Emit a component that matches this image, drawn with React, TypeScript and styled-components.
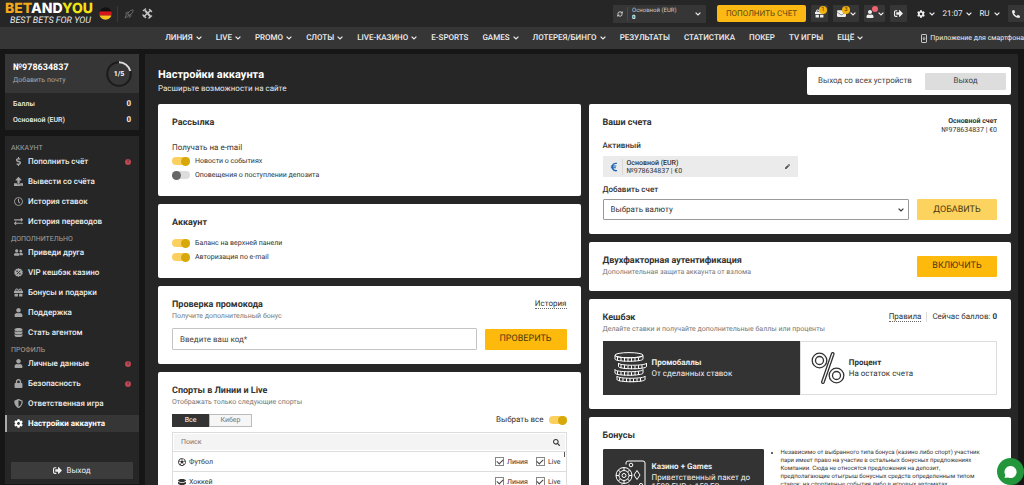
import React from "react";
import styled, { createGlobalStyle, css } from "styled-components";
import {
  FaDollarSign, FaUpload, FaRegClock, FaExchangeAlt, FaUserFriends, FaGift, FaUser, FaDatabase,
  FaLock, FaShieldAlt, FaCog, FaSignOutAlt, FaEnvelope, FaPhoneAlt, FaSearch, FaPen,
  FaRegFutbol, FaHockeyPuck, FaEuroSign,
} from "react-icons/fa";
import { Rocket, RefreshCw } from "lucide-react";

const GlobalStyle = createGlobalStyle`
  * { box-sizing: border-box; }
  html, body, #root { height: 100%; }
  body { margin: 0; background: #161616; color: #333; font: 400 8px/12px Roboto, "Liberation Sans", sans-serif; text-rendering: geometricPrecision; overflow: hidden; }
  button, input, select { font: inherit; color: inherit; margin: 0; text-rendering: inherit; }
  button { cursor: pointer; border: 0; padding: 0; }
  a { color: inherit; text-decoration: none; }
  h1, h2, h3, p, ul { margin: 0; padding: 0; }
  svg { flex: none; display: block; }
`;

const Shell = styled.div`
  height: 100vh;
  display: flex;
  flex-direction: column;
  overflow: hidden;
`;

/* ---------- top bar ---------- */
const TopBar = styled.header`
  flex: none;
  height: 27px;
  display: flex;
  align-items: center;
  background: #262626;
  color: #eee;
  padding-left: 5px;
  overflow: hidden;
`;
const Logo = styled.a`
  display: flex;
  flex-direction: column;
  font: 800 14px/15px Inter, sans-serif;
  color: #fff;
  width: 86px;
  white-space: nowrap;
`;
const Gold = styled.span`color: #f0a81c;`;
const Lemon = styled.span`color: #f2e311;`;
const Slogan = styled.span`
  font: italic 400 9px/10px Roboto, sans-serif;
  text-align: right;
  color: #e8e8e8;
`;
const FlagButton = styled.button`
  background: none;
  margin-left: 8px;
`;
const Divider = styled.span`
  width: 1px;
  height: 16px;
  background: #3a3a3a;
  margin: 0 6px 0 5px;
`;
const IconLink = styled.a`
  display: flex;
  margin-right: 8px;
  color: #c4c4c4;
`;
const TopTools = styled.div`
  margin-left: auto;
  flex: none;
  display: flex;
  align-items: center;
  gap: 5px;
`;
const Balance = styled.button`
  width: 93px;
  height: 18px;
  display: flex;
  align-items: center;
  gap: 4px;
  padding: 0 5px 0 4px;
  background: #363636;
  color: #eee;
  border-radius: 1px;
  text-align: left;
`;
const BalanceText = styled.span`
  flex: 1;
  border-left: 1px solid #4a4a4a;
  padding-left: 4px;
  font-size: 6px;
  line-height: 7px;
  color: #ccc;
  b { display: block; color: #fff; }
`;
const TopDeposit = styled.button`
  width: 89px;
  height: 17px;
  margin: 0 0 0 6px;
  background: #fdb913;
  color: #5a4a10;
  border-radius: 2px;
  font-size: 8px;
`;
const TopButton = styled.button<{ $w: number; $plain?: boolean }>`
  position: relative;
  width: ${(p) => p.$w}px;
  height: 17px;
  display: flex;
  align-items: center;
  justify-content: center;
  gap: 4px;
  background: ${(p) => (p.$plain ? "transparent" : "#363636")};
  color: #eee;
  border-radius: 1px;
`;
const Bubble = styled.span<{ $red?: boolean }>`
  position: absolute;
  top: 1px;
  right: ${(p) => (p.$red ? 7 : 1)}px;
  width: ${(p) => (p.$red ? 6 : 8)}px;
  height: ${(p) => (p.$red ? 6 : 8)}px;
  border-radius: 50%;
  background: ${(p) => (p.$red ? "#ef6370" : "#f0b310")};
  color: #4a3a08;
  font-size: 6px;
  line-height: 8px;
  text-align: center;
`;
const MailBubble = styled(Bubble)`right: 9px;`;

/* ---------- navigation ---------- */
const NavBar = styled.nav`
  flex: none;
  height: 22px;
  display: flex;
  align-items: center;
  background: #363636;
  color: #eee;
  overflow: hidden;
  white-space: nowrap;
`;
const NavLinks = styled.div`
  flex: 1;
  display: flex;
  justify-content: center;
  gap: 14px;
  padding-left: 107px;
`;
const NavLink = styled.a`
  display: flex;
  align-items: center;
  gap: 3px;
  font-weight: 500;
`;
const AppLink = styled.a`
  display: flex;
  align-items: center;
  gap: 3px;
  font-size: 7px;
`;

/* ---------- columns ---------- */
const Body = styled.div`
  flex: 1;
  min-height: 0;
  display: grid;
  grid-template-columns: 134px minmax(0, 1fr);
  gap: 6px;
  padding: 5px 6px 0 5px;
`;
const Sidebar = styled.aside`
  display: flex;
  flex-direction: column;
  gap: 6px;
  min-height: 0;
  color: #eee;
  padding-bottom: 1px;
`;
const Profile = styled.section`
  background: #262626;
  padding-bottom: 2px;
`;
const ProfileHead = styled.div`
  display: flex;
  align-items: center;
  justify-content: space-between;
  background: #363636;
  height: 39px;
  padding: 0 6px 0 8px;
  margin-bottom: 3px;
`;
const AccountNo = styled.strong`
  display: block;
  font-size: 9px;
  font-weight: 700;
  color: #fff;
`;
const MailLink = styled.a`
  font-size: 7px;
  line-height: 11px;
  color: #a8a8a8;
`;
const BalanceLine = styled.div`
  display: flex;
  justify-content: space-between;
  padding: 0 8px;
  line-height: 16px;
  font-weight: 500;
  font-size: 7px;
  b { font-size: 8px; }
`;
const Menu = styled.nav`
  flex: 1;
  display: flex;
  flex-direction: column;
  background: #262626;
  padding: 5px 0;
`;
const MenuTitle = styled.h3`
  font-size: 7px;
  line-height: 8px;
  font-weight: 400;
  color: #a0a0a0;
  padding: 3px 6px 0;
`;
const MenuList = styled.ul`
  list-style: none;
  display: flex;
  flex-direction: column;
  gap: 3px;
  padding: 1px 0 2px;
`;
const MenuLink = styled.a<{ $active?: boolean }>`
  display: flex;
  align-items: center;
  gap: 5px;
  height: 17px;
  padding: 0 8px 0 7px;
  border-left: 2px solid transparent;
  font-weight: 500;
  svg { color: #a6a6a6; }
  ${(p) => p.$active && css`
    background: #363636;
    border-color: #aaa;
    color: #fff;
    font-weight: 700;
    svg { color: #fff; }
  `}
`;
const Alert = styled.span`
  margin-left: auto;
  width: 6px;
  height: 6px;
  border-radius: 50%;
  background: #c2454f;
  color: #262626;
  font-size: 5px;
  line-height: 6px;
  text-align: center;
`;
const LogoutButton = styled.button`
  margin: auto 6px 0;
  height: 17px;
  display: flex;
  align-items: center;
  justify-content: center;
  gap: 4px;
  background: #3c3c3c;
  color: #eee;
`;

const Main = styled.main`
  background: #262626;
  padding: 13px 7px 0 13px;
  overflow: hidden;
`;
const PageHead = styled.div`
  display: flex;
  justify-content: space-between;
  align-items: flex-end;
  margin-bottom: 8px;
  color: #fff;
`;
const PageTitle = styled.h1`
  font-size: 11px;
  line-height: 14px;
  font-weight: 700;
`;
const PageSub = styled.p`
  line-height: 14px;
  color: #e6e6e6;
`;
const LogoutAll = styled.div`
  display: flex;
  align-items: center;
  justify-content: space-between;
  width: 204px;
  height: 28px;
  padding: 0 5px 0 11px;
  margin-bottom: 1px;
  border-radius: 2px;
  background: #fff;
  color: #444;
`;
const GreyButton = styled.button`
  width: 81px;
  height: 17px;
  background: #ddd;
  color: #444;
  border-radius: 1px;
`;
const Columns = styled.div`
  display: grid;
  grid-template-columns: minmax(0, 1fr) minmax(0, 1fr);
  gap: 8px;
`;
const Column = styled.div`
  display: flex;
  flex-direction: column;
  gap: 8px;
`;

/* ---------- cards ---------- */
const Card = styled.section`
  background: #fff;
  border-radius: 2px;
  padding: 13px 14px 14px;
`;
const Row = styled.div<{ $top?: number; $gap?: number; $start?: boolean }>`
  display: flex;
  align-items: ${(p) => (p.$start ? "flex-start" : "center")};
  justify-content: space-between;
  gap: ${(p) => p.$gap ?? 0}px;
  margin-top: ${(p) => p.$top ?? 0}px;
`;
const CardTitle = styled.h2`
  font-size: 9px;
  line-height: 12px;
  font-weight: 700;
  color: #333;
`;
const Hint = styled.p`
  font-size: 7px;
  line-height: 10px;
  color: #777;
`;
const Lead = styled.p`margin-top: 13px;`;
const Toggles = styled.div<{ $top?: number }>`margin-top: ${(p) => p.$top ?? 0}px;`;
const ToggleLabel = styled.label<{ $big?: boolean }>`
  display: flex;
  align-items: center;
  flex-direction: ${(p) => (p.$big ? "row-reverse" : "row")};
  gap: 5px;
  height: 14px;
  font-size: ${(p) => (p.$big ? 8 : 7)}px;
`;
const Switch = styled.input`
  appearance: none;
  width: 18px;
  height: 8px;
  border-radius: 4px;
  background: #ddd;
  display: flex;
  align-items: center;
  &::before {
    content: "";
    width: 9px;
    height: 9px;
    flex: none;
    border-radius: 50%;
    background: #666;
  }
  &:checked { background: #fcd05e; justify-content: flex-end; }
  &:checked::before { background: #d6a80a; }
`;
const DottedLink = styled.a`
  border-bottom: 1px dotted #666;
  line-height: 9px;
`;
const YellowButton = styled.button<{ $w: number; $soft?: boolean }>`
  flex: none;
  width: ${(p) => p.$w}px;
  height: 21px;
  border-radius: 1px;
  background: ${(p) => (p.$soft ? "#fdd35f" : "#fdb90c")};
  color: #4a3b10;
  font-size: 9px;
`;
const CodeInput = styled.input`
  flex: 1;
  min-width: 0;
  height: 22px;
  border: 1px solid #c4c4c4;
  border-radius: 1px;
  padding: 0 7px;
  background: #fff;
  outline: 0;
  &::placeholder { color: #444; opacity: 1; }
`;
const Summary = styled.div`
  font-size: 7px;
  line-height: 9px;
  text-align: right;
  b { display: block; font-weight: 700; }
`;
const Label = styled.label<{ $top: number; $bottom: number }>`
  display: block;
  font-size: 8px;
  font-weight: 500;
  margin: ${(p) => p.$top}px 0 ${(p) => p.$bottom}px;
`;
const Wallet = styled.div`
  display: flex;
  align-items: center;
  width: 195px;
  height: 21px;
  padding: 0 8px 0 6px;
  background: #ebebeb;
  color: #1f64b4;
`;
const WalletText = styled.div`
  flex: 1;
  margin-left: 3px;
  padding-left: 4px;
  border-left: 1px solid #d8d8d8;
  font-size: 7px;
  line-height: 8px;
  color: #333;
  b { display: block; font-weight: 500; }
`;
const EditButton = styled.button`
  background: none;
  color: #555;
`;
const SelectBox = styled.div`
  flex: 1;
  display: grid;
  align-items: center;
  > * { grid-area: 1 / 1; }
  > svg { justify-self: end; margin-right: 5px; pointer-events: none; }
`;
const Select = styled.select`
  appearance: none;
  width: 100%;
  height: 21px;
  padding: 0 7px;
  border: 1px solid #999;
  border-radius: 1px;
  background: #fff;
  outline: 0;
`;
const Points = styled.div`
  display: flex;
  line-height: 9px;
  gap: 5px;
  span { border-left: 1px solid #ddd; padding-left: 5px; }
`;
const Tiles = styled.div`
  display: grid;
  grid-template-columns: 1fr 1fr;
  margin-top: 7px;
`;
const Tile = styled.button<{ $dark?: boolean }>`
  display: flex;
  align-items: center;
  gap: 4px;
  height: 54px;
  padding: 0 10px;
  text-align: left;
  background: ${(p) => (p.$dark ? "#333" : "#fff")};
  color: ${(p) => (p.$dark ? "#eee" : "#333")};
  border: 1px solid ${(p) => (p.$dark ? "#333" : "#ddd")};
  b { display: block; font-weight: 700; }
  line-height: 11px;
`;
const BonusGrid = styled.div`
  display: grid;
  grid-template-columns: 161px 1fr;
  align-items: start;
  gap: 11px;
  margin-top: 7px;
`;
const BonusTile = styled(Tile)`
  border-radius: 1px;
  line-height: 9px;
  b { margin-bottom: 2px; }
`;
const Notes = styled.ul`
  padding-left: 6px;
  font-size: 6px;
  line-height: 8px;
  list-style: disc;
  white-space: nowrap;
`;

const Tabs = styled.div`
  display: flex;
`;
const Tab = styled.button<{ $active?: boolean; $w: number }>`
  width: ${(p) => p.$w}px;
  height: 13px;
  font-size: 7px;
  line-height: 11px;
  border: 1px solid ${(p) => (p.$active ? "#333" : "#bbb")};
  background: ${(p) => (p.$active ? "#333" : "#f6f6f6")};
  color: ${(p) => (p.$active ? "#fff" : "#777")};
`;
const SportsBox = styled.div`
  margin-top: 5px;
  border: 1px solid #ddd;
`;
const SearchLine = styled.label`
  display: flex;
  align-items: center;
  margin: 1px;
  padding: 0 5px;
  height: 16px;
  background: #f4f4f4;
`;
const SearchInput = styled.input`
  flex: 1;
  border: 0;
  background: none;
  outline: 0;
  padding: 0 2px;
  font-size: 7px;
  &::placeholder { color: #777; opacity: 1; }
`;
const SportList = styled.div`
  position: relative;
  height: 60px;
`;
const ScrollThumb = styled.span`
  position: absolute;
  top: 1px;
  right: 1px;
  width: 1px;
  height: 5px;
  background: #555;
`;
const SportRow = styled.div`
  display: flex;
  align-items: center;
  gap: 8px;
  height: 20px;
  padding: 0 5px;
  border-top: 1px solid #ddd;
  font-size: 7px;
`;
const SportName = styled.span`
  flex: 1;
  display: flex;
  align-items: center;
  gap: 3px;
`;
const CheckLabel = styled.label`
  display: flex;
  align-items: center;
  gap: 3px;
`;
const Check = styled.input`
  appearance: none;
  width: 9px;
  height: 9px;
  border: 1px solid #888;
  display: grid;
  place-items: center;
  &:checked::before {
    content: "";
    width: 5px;
    height: 3px;
    border: solid #444;
    border-width: 0 0 1px 1px;
    transform: rotate(-45deg);
    margin-bottom: 2px;
  }
`;
const ChatButton = styled.button`
  position: fixed;
  right: 0;
  bottom: 0;
  width: 27px;
  height: 27px;
  border-radius: 50%;
  background: #23953a;
  display: grid;
  place-items: center;
`;

/* ---------- drawings ---------- */
const Chevron = () => (
  <svg width="6" height="4" viewBox="0 0 6 4" fill="none" stroke="currentColor" strokeWidth="1.2"><path d="M.6.6 3 3 5.4.6" /></svg>
);
const Flag = () => (
  <svg width="13" height="13" viewBox="0 0 13 13">
    <clipPath id="flag"><circle cx="6.5" cy="6.5" r="6.2" /></clipPath>
    <g clipPath="url(#flag)">
      <rect width="13" height="4.5" fill="#111" /><rect y="4.5" width="13" height="4" fill="#d8141c" /><rect y="8.5" width="13" height="5" fill="#f7c51e" />
    </g>
  </svg>
);
const Plane = () => (
  <svg width="11" height="11" viewBox="0 0 22 22" fill="none" stroke="currentColor" strokeLinecap="round">
    <path strokeWidth="4" d="m7 6 9 10" /><path strokeWidth="3" d="M4 17 17 5" /><path strokeWidth="3" d="M3 5 7 2M14 20l5-4M15 3l4 4M2 14l5 5" />
  </svg>
);
const Ring = () => (
  <svg width="28" height="28" viewBox="0 0 28 28" fill="none">
    <circle cx="14" cy="14" r="11.8" stroke="#1b1b1b" strokeWidth="2" />
    <path d="M14 2.2A11.8 11.8 0 0 1 25.3 11" stroke="#ddd" strokeWidth="2" />
    <text x="14" y="16" textAnchor="middle" fill="#fff" fontSize="7" fontWeight="700">1/5</text>
  </svg>
);
const PercentBadge = () => (
  <svg width="9" height="9" viewBox="0 0 16 16">
    <path fill="currentColor" d="m8 0 2 1.6 2.6-.2.8 2.5L15.600 5.500 15 8l.6 2.500-2.200 1.600-.8 2.500-2.600-.2L8 16l-2-1.600-2.600.2-.8-2.500L.4 10.500 1 8 .4 5.500l2.200-1.600.8-2.500 2.600.2z" />
    <path stroke="#262626" strokeWidth="1.500" d="m5 11 6-6" /><circle cx="5.500" cy="5.700" r="1.400" fill="#262626" /><circle cx="10.500" cy="10.300" r="1.400" fill="#262626" />
  </svg>
);
const PhoneApp = () => (
  <svg width="6" height="9" viewBox="0 0 6 9" fill="none" stroke="currentColor" strokeWidth=".8"><rect x=".5" y=".5" width="5" height="8" rx=".6" /><path d="M3 2.700v3M1.700 4.400 3 5.700l1.300-1.300" /></svg>
);
const Coin = ({ x, y }: { x: number; y: number }) => (
  <g transform={`translate(${x} ${y})`}>
    <path d="M1 2.500v3.500c0 3 28 3 28 0V2.500" />
    <path d="M3.500 4v3.500M7 4.600V8M10.500 5v3.500M14 5.200v3.500M17.500 5.200v3.500M21 4.800v3.500M24.500 4.400v3.500" />
    <path d="M1 2.500c0 3 28 3 28 0" />
  </g>
);
const Coins = () => (
  <svg width="34" height="32" viewBox="0 0 34 32" fill="none" stroke="#fff" strokeWidth="1">
    <ellipse cx="15" cy="3.200" rx="14" ry="2.600" />
    <Coin x={0} y={1} /><Coin x={3.500} y={8.500} /><Coin x={0} y={15} /><Coin x={2} y={21.500} />
  </svg>
);
const Percent = () => (
  <svg width="34" height="32" viewBox="0 0 34 32" fill="none" stroke="#333" strokeWidth="1.300">
    <circle cx="8.500" cy="8.500" r="7.300" /><circle cx="8.500" cy="8.500" r="4" />
    <circle cx="25.500" cy="23.500" r="7.300" /><circle cx="25.500" cy="23.500" r="4" />
    <path d="M20.500 1.500 10.700 29.800c-.4 1.600 1.700 2.300 2.400.7L22.900 2.300c.5-1.600-1.800-2.400-2.400-.8z" />
  </svg>
);
const CasinoCard = () => (
  <svg width="34" height="34" viewBox="0 0 34 34" fill="none" stroke="#fff" strokeWidth="1">
    <path d="M12 5.500V4a2 2 0 0 1 2-2h15a2 2 0 0 1 2 2v29H6v-7" />
    <circle cx="10" cy="16.500" r="8" /><circle cx="10" cy="16.500" r="5" /><circle cx="10" cy="16.500" r="2" />
    <path d="M10 8.500v3M10 21.500v3M2 16.500h3M15 16.500h3M4.400 11l2 2M15.600 22l-2-2M4.400 22l2-2M15.600 11l-2 2" />
    <path d="m23 11.500 3 4.500-3 4.500-3-4.500z" /><circle cx="17" cy="6" r="1.800" /><circle cx="27" cy="26" r="1.600" />
    <circle cx="8" cy="29" r="3" /><circle cx="15" cy="29" r="3" />
  </svg>
);
const ChatGlyph = () => (
  <svg width="15" height="14" viewBox="0 0 15 14" fill="#fff"><path d="M7.500 1a6 6 0 1 1-2.500 11.400L1.500 13l.8-3A6 6 0 0 1 7.500 1z" /></svg>
);

/* ---------- content ---------- */
type Item = { icon: React.ReactNode; text: string; alert?: boolean; active?: boolean };
const groups: { title: string; items: Item[] }[] = [
  { title: "АККАУНТ", items: [
    { icon: <FaDollarSign size={9} />, text: "Пополнить счёт", alert: true },
    { icon: <FaUpload size={9} />, text: "Вывести со счёта" },
    { icon: <FaRegClock size={9} />, text: "История ставок" },
    { icon: <FaExchangeAlt size={9} />, text: "История переводов" },
  ] },
  { title: "ДОПОЛНИТЕЛЬНО", items: [
    { icon: <FaUserFriends size={9} />, text: "Приведи друга" },
    { icon: <PercentBadge />, text: "VIP кешбэк казино" },
    { icon: <FaGift size={9} />, text: "Бонусы и подарки" },
    { icon: <FaUser size={9} />, text: "Поддержка" },
    { icon: <FaDatabase size={9} />, text: "Стать агентом" },
  ] },
  { title: "ПРОФИЛЬ", items: [
    { icon: <FaUser size={9} />, text: "Личные данные", alert: true },
    { icon: <FaLock size={9} />, text: "Безопасность", alert: true },
    { icon: <FaShieldAlt size={9} />, text: "Ответственная игра" },
    { icon: <FaCog size={9} />, text: "Настройки аккаунта", active: true },
  ] },
];
const navItems: [string, boolean][] = [
  ["ЛИНИЯ", true], ["LIVE", true], ["PROMO", true], ["СЛОТЫ", true], ["LIVE-КАЗИНО", true],
  ["E-SPORTS", false], ["GAMES", true], ["ЛОТЕРЕЯ/БИНГО", true], ["РЕЗУЛЬТАТЫ", false],
  ["СТАТИСТИКА", false], ["ПОКЕР", false], ["TV ИГРЫ", false], ["ЕЩЁ", true],
];
const sports = [
  { icon: <FaRegFutbol size={8} />, name: "Футбол" },
  { icon: <FaHockeyPuck size={8} />, name: "Хоккей" },
];

const Toggle = ({ text, on, big }: { text: string; on?: boolean; big?: boolean }) => (
  <ToggleLabel $big={big}>
    <Switch type="checkbox" role="switch" defaultChecked={on} />
    {text}
  </ToggleLabel>
);

export default function App() {
  return (
    <Shell>
      <GlobalStyle />
      <TopBar>
        <Logo href="#">
          <span><Gold>BET</Gold>AND<Lemon>YOU</Lemon></span>
          <Slogan>BEST BETS FOR YOU</Slogan>
        </Logo>
        <FlagButton aria-label="Страна"><Flag /></FlagButton>
        <Divider />
        <IconLink href="#" aria-label="Crash"><Rocket size={10} strokeWidth={1.5} color="#888" /></IconLink>
        <IconLink href="#" aria-label="Бонус"><Plane /></IconLink>
        <TopTools>
          <Balance>
            <RefreshCw size={6} strokeWidth={3} />
            <BalanceText>Основной (EUR)<b>0</b></BalanceText>
            <Chevron />
          </Balance>
          <TopDeposit>ПОПОЛНИТЬ СЧЕТ</TopDeposit>
          <TopButton $w={17} aria-label="Подарки"><FaGift size={9} /><Bubble>1</Bubble></TopButton>
          <TopButton $w={26} aria-label="Сообщения"><FaEnvelope size={9} /><Chevron /><MailBubble>3</MailBubble></TopButton>
          <TopButton $w={21} aria-label="Профиль"><FaUser size={8} /><Chevron /><Bubble $red /></TopButton>
          <TopButton $w={17} aria-label="Выйти"><FaSignOutAlt size={9} /></TopButton>
          <TopButton $w={27} $plain aria-label="Настройки"><FaCog size={8} /><Chevron /></TopButton>
          <TopButton $w={27} $plain>21:07 <Chevron /></TopButton>
          <TopButton $w={27} $plain>RU <Chevron /></TopButton>
          <TopButton $w={16} aria-label="Телефон"><FaPhoneAlt size={8} /></TopButton>
        </TopTools>
      </TopBar>
      <NavBar>
        <NavLinks>
          {navItems.map(([text, more]) => <NavLink href="#" key={text}>{text}{more && <Chevron />}</NavLink>)}
        </NavLinks>
        <AppLink href="#"><PhoneApp />Приложение для смартфона</AppLink>
      </NavBar>
      <Body>
        <Sidebar>
          <Profile>
            <ProfileHead>
              <div>
                <AccountNo>№978634837</AccountNo>
                <MailLink href="#">Добавить почту</MailLink>
              </div>
              <Ring />
            </ProfileHead>
            <BalanceLine>Баллы <b>0</b></BalanceLine>
            <BalanceLine>Основной (EUR) <b>0</b></BalanceLine>
          </Profile>
          <Menu>
            {groups.map((g) => (
              <React.Fragment key={g.title}>
                <MenuTitle>{g.title}</MenuTitle>
                <MenuList>
                  {g.items.map((i) => (
                    <li key={i.text}>
                      <MenuLink href="#" $active={i.active}>{i.icon}{i.text}{i.alert && <Alert>!</Alert>}</MenuLink>
                    </li>
                  ))}
                </MenuList>
              </React.Fragment>
            ))}
            <LogoutButton><FaSignOutAlt size={9} />Выход</LogoutButton>
          </Menu>
        </Sidebar>
        <Main>
          <PageHead>
            <div>
              <PageTitle>Настройки аккаунта</PageTitle>
              <PageSub>Расширьте возможности на сайте</PageSub>
            </div>
            <LogoutAll>Выход со всех устройств <GreyButton>Выход</GreyButton></LogoutAll>
          </PageHead>
          <Columns>
            <Column>
              <Card>
                <CardTitle>Рассылка</CardTitle>
                <Lead>Получать на e-mail</Lead>
                <Toggles>
                  <Toggle text="Новости о событиях" on />
                  <Toggle text="Оповещения о поступлении депозита" />
                </Toggles>
              </Card>
              <Card>
                <CardTitle>Аккаунт</CardTitle>
                <Toggles $top={7}>
                  <Toggle text="Баланс на верхней панели" on />
                  <Toggle text="Авторизация по e-mail" on />
                </Toggles>
              </Card>
              <Card>
                <Row $start>
                  <CardTitle>Проверка промокода</CardTitle>
                  <DottedLink href="#">История</DottedLink>
                </Row>
                <Hint>Получите дополнительный бонус</Hint>
                <Row $top={7} $gap={8}>
                  <CodeInput aria-label="Промокод" placeholder="Введите ваш код*" />
                  <YellowButton $w={82}>ПРОВЕРИТЬ</YellowButton>
                </Row>
              </Card>
              <Card>
                <CardTitle>Спорты в Линии и Live</CardTitle>
                <Hint>Отображать только следующие спорты</Hint>
                <Row $top={6}>
                  <Tabs><Tab $w={37} $active>Все</Tab><Tab $w={43}>Кибер</Tab></Tabs>
                  <Toggle text="Выбрать все" on big />
                </Row>
                <SportsBox>
                  <SearchLine><SearchInput placeholder="Поиск" /><FaSearch size={7} /></SearchLine>
                  <SportList>
                    {sports.map((s) => (
                      <SportRow key={s.name}>
                        <SportName>{s.icon}{s.name}</SportName>
                        <CheckLabel><Check type="checkbox" defaultChecked />Линия</CheckLabel>
                        <CheckLabel><Check type="checkbox" defaultChecked />Live</CheckLabel>
                      </SportRow>
                    ))}
                    <ScrollThumb />
                  </SportList>
                </SportsBox>
              </Card>
            </Column>
            <Column>
              <Card>
                <Row $start>
                  <CardTitle>Ваши счета</CardTitle>
                  <Summary><b>Основной счет</b>№978634837 | €0</Summary>
                </Row>
                <Label as="h3" $top={5} $bottom={4}>Активный</Label>
                <Wallet>
                  <FaEuroSign size={10} />
                  <WalletText><b>Основной (EUR)</b>№978634837 | €0</WalletText>
                  <EditButton aria-label="Изменить"><FaPen size={5} /></EditButton>
                </Wallet>
                <Label htmlFor="currency" $top={7} $bottom={3}>Добавить счет</Label>
                <Row $gap={8}>
                  <SelectBox>
                    <Select id="currency"><option>Выбрать валюту</option></Select>
                    <Chevron />
                  </SelectBox>
                  <YellowButton $w={80} $soft>ДОБАВИТЬ</YellowButton>
                </Row>
              </Card>
              <Card>
                <Row>
                  <div>
                    <CardTitle>Двухфакторная аутентификация</CardTitle>
                    <Hint>Дополнительная защита аккаунта от взлома</Hint>
                  </div>
                  <YellowButton $w={80}>ВКЛЮЧИТЬ</YellowButton>
                </Row>
              </Card>
              <Card>
                <Row $start>
                  <CardTitle>Кешбэк</CardTitle>
                  <Points><DottedLink href="#">Правила</DottedLink><span>Сейчас баллов: <b>0</b></span></Points>
                </Row>
                <Hint>Делайте ставки и получайте дополнительные баллы или проценты</Hint>
                <Tiles>
                  <Tile $dark><Coins /><span><b>Промобаллы</b>От сделанных ставок</span></Tile>
                  <Tile><Percent /><span><b>Процент</b>На остаток счета</span></Tile>
                </Tiles>
              </Card>
              <Card>
                <CardTitle>Бонусы</CardTitle>
                <BonusGrid>
                  <BonusTile $dark><CasinoCard /><span><b>Казино + Games</b>Приветственный пакет до 1500 EUR + 150 FS</span></BonusTile>
                  <Notes>
                    <li>Независимо от выбранного типа бонуса (казино либо спорт) участник<br />пари имеет право на участие в остальных бонусных предложениях<br />Компании. Сюда не относятся предложения на депозит,<br />предполагающие отыгрыш бонусных средств определенным типом<br />ставок: на спортивные события либо в игровых автоматах.</li>
                  </Notes>
                </BonusGrid>
              </Card>
            </Column>
          </Columns>
        </Main>
      </Body>
      <ChatButton aria-label="Чат"><ChatGlyph /></ChatButton>
    </Shell>
  );
}
